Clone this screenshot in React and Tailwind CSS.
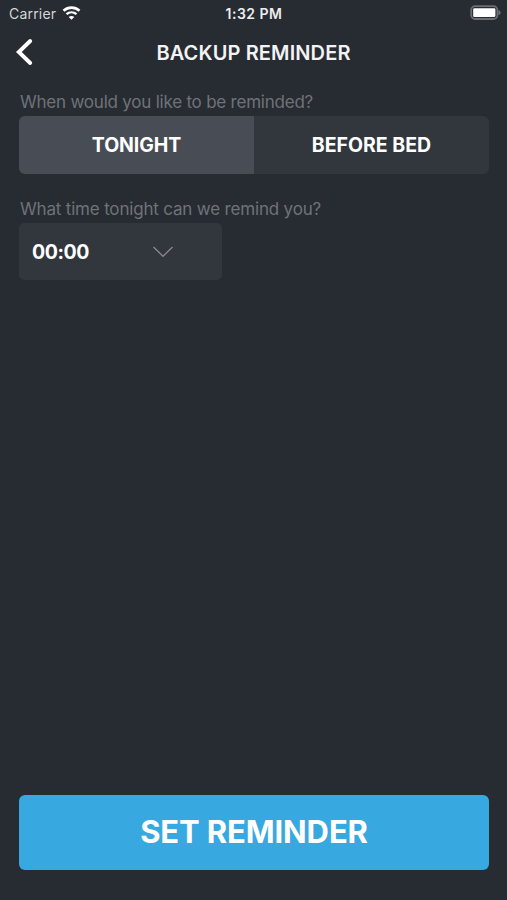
const WifiIcon = () => (
  <svg width="19" height="14" viewBox="0 0 18 14" fill="none" className="ml-[6px] relative -top-px">
    <path d="M1 4.7C5.6 0.6 12.4 0.6 17 4.7" stroke="white" strokeWidth="2.7" />
    <path d="M4 8.2C6.9 5.7 11.1 5.7 14 8.2" stroke="white" strokeWidth="2.4" />
    <path d="M9 13.8L6.2 10.9C7.8 9.6 10.2 9.6 11.8 10.9Z" fill="white" />
  </svg>
);

const BatteryIcon = () => (
  <svg width="32" height="16" viewBox="0 0 32 16" fill="none" className="relative -top-px">
    <rect x="1.2" y="1.2" width="26.2" height="12.8" rx="4" stroke="#6b6f73" strokeWidth="1.8" />
    <rect x="3.2" y="3.2" width="22.2" height="8.8" rx="1.2" fill="white" />
    <path d="M28.5 5.2C31.2 5.8 31.2 9.4 28.5 10Z" fill="#73777b" />
  </svg>
);

const StatusBar = () => (
  <div className="h-7 pl-[9px] pr-[5px] grid grid-cols-[1fr_auto_1fr] items-center text-[14px] leading-7">
    <div className="flex items-center text-[#d4d6d8]">
      <span className="tracking-[0.2px]">Carrier</span>
      <WifiIcon />
    </div>
    <span className="relative -left-[1.5px] text-center font-semibold text-[14px] tracking-[0.5px] text-[#eceded]">
      1:32 PM
    </span>
    <div className="flex justify-end">
      <BatteryIcon />
    </div>
  </div>
);

const Header = () => (
  <header className="h-12 grid grid-cols-[60px_1fr_60px] items-center">
    <button aria-label="Back" className="pl-[15px]">
      <svg width="18" height="28" viewBox="0 0 18 28" fill="none">
        <path d="M15.2 3L3.8 14L15.2 25" stroke="white" strokeWidth="3.9" strokeLinecap="round" />
      </svg>
    </button>
    <h1 className="pt-px text-center text-[20px] font-semibold tracking-[0.12px] text-[#f3f3f4] whitespace-nowrap">
      BACKUP REMINDER
    </h1>
  </header>
);

const App = () => {
  return (
    <div className="w-full h-[900px] flex flex-col bg-[#272b32] text-white font-['Inter',sans-serif]">
      <StatusBar />
      <Header />

      <main className="flex-1 flex flex-col pl-[19px] pr-[18px] pt-4 pb-[30px]">
        {/* ===== WHEN ===== */}
        <p className="h-6 pl-px text-[17px] leading-5 tracking-[-0.22px] text-[#6f7377]">
          When would you like to be reminded?
        </p>
        <div className="h-[58px] flex rounded-[6px] overflow-hidden bg-[#32363d] text-[19.5px] font-bold">
          <button className="flex-1 pt-0.5 bg-[#484c54] tracking-[-0.1px]">TONIGHT</button>
          <button className="flex-1 pt-0.5">BEFORE BED</button>
        </div>

        {/* ===== TIME ===== */}
        <p className="mt-[25px] h-6 pl-px text-[17px] leading-5 tracking-[-0.18px] text-[#6f7377]">
          What time tonight can we remind you?
        </p>
        <button className="h-[57px] w-[203px] px-[13px] flex items-center rounded-[5px] bg-[#32363d] text-[19.5px] font-bold">
          <span className="w-[120px] pt-[3px] text-left tracking-[-0.4px]">00:00</span>
          <svg width="22" height="14" viewBox="0 0 22 14" fill="none">
            <path d="M1.5 2L11 11.3L20.5 2" stroke="#898c90" strokeWidth="1.2" />
          </svg>
        </button>

        {/* ===== SUBMIT ===== */}
        <button className="mt-auto h-[75px] rounded-[6px] bg-[#37a8e0] text-[31px] font-bold tracking-[-0.12px]">
          SET REMINDER
        </button>
      </main>
    </div>
  );
};

export default App;
